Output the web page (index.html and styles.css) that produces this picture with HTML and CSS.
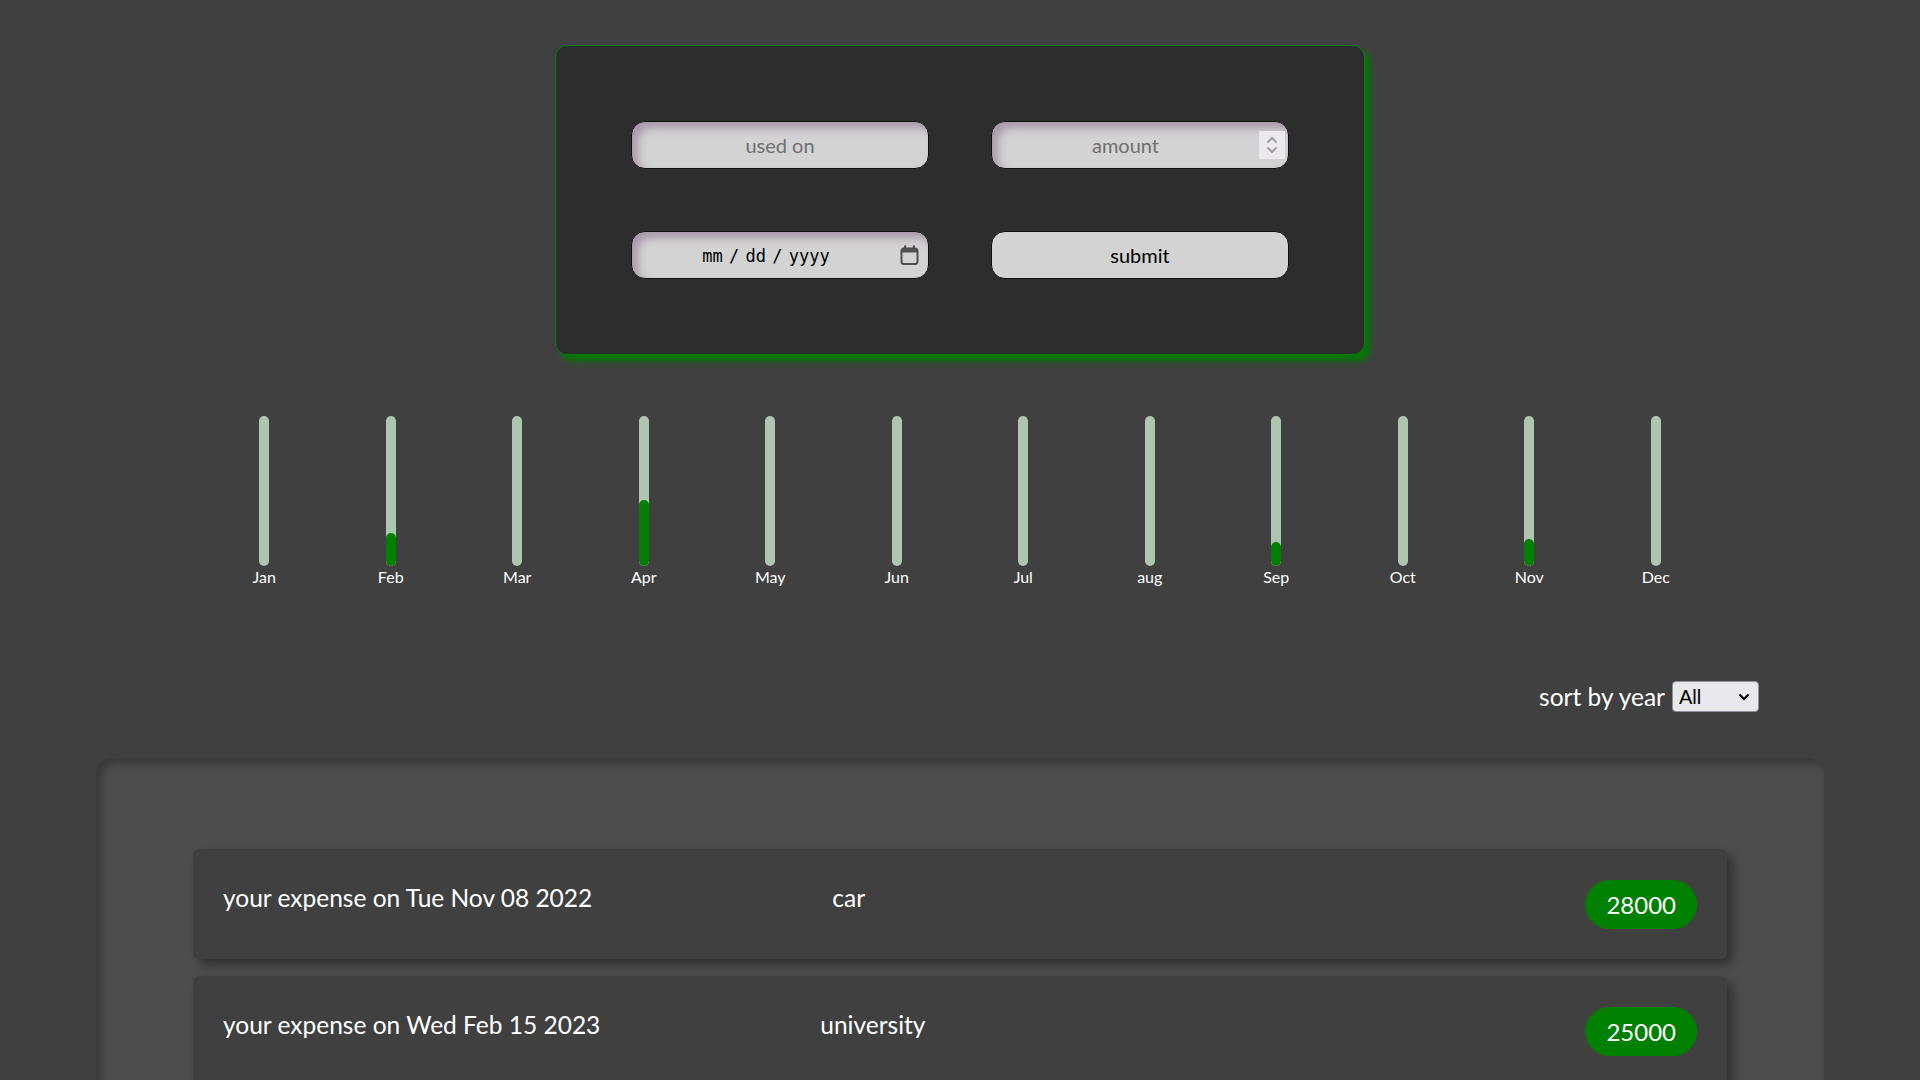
FILE: index.html
```html
<!DOCTYPE html>
<html lang="en">
<head>
<meta charset="utf-8">
<title>Expenses</title>
<link rel="stylesheet" href="styles.css">
</head>
<body>
<main class="app">
  <form class="new-expense">
    <div class="field">
      <input class="field-input" type="text" placeholder="used on">
    </div>
    <div class="field">
      <input class="field-input" type="number" placeholder="amount">
      <span class="spinner" aria-hidden="true">
        <svg width="14" height="22" viewBox="0 0 14 22"><path d="M2.5 8.5 L7 4 L11.5 8.5" fill="none" stroke="#8d8b93" stroke-width="1.7"/><path d="M2.5 13.5 L7 18 L11.5 13.5" fill="none" stroke="#8d8b93" stroke-width="1.7"/></svg>
      </span>
    </div>
    <div class="field">
      <input class="field-input date" type="text" placeholder="mm / dd / yyyy">
      <svg class="cal" width="19" height="20" viewBox="0 0 19 20" aria-hidden="true">
        <rect x="1.5" y="3.5" width="16" height="15.5" rx="2.5" fill="none" stroke="#4f4f4f" stroke-width="2"/>
        <path d="M1.5 6 a2.5 2.5 0 0 1 2.5 -2.5 h11 a2.5 2.5 0 0 1 2.5 2.5 V7.5 H1.5 Z" fill="#4f4f4f"/>
        <rect x="4" y="0.5" width="2.2" height="4" fill="#4f4f4f"/>
        <rect x="12.8" y="0.5" width="2.2" height="4" fill="#4f4f4f"/>
      </svg>
    </div>
    <button class="submit" type="button">submit</button>
  </form>

  <section class="chart">
    <div class="chart-bar"><div class="track"><div class="fill" style="height:0%"></div></div><span class="label">Jan</span></div>
    <div class="chart-bar"><div class="track"><div class="fill" style="height:22%"></div></div><span class="label">Feb</span></div>
    <div class="chart-bar"><div class="track"><div class="fill" style="height:0%"></div></div><span class="label">Mar</span></div>
    <div class="chart-bar"><div class="track"><div class="fill" style="height:44%"></div></div><span class="label">Apr</span></div>
    <div class="chart-bar"><div class="track"><div class="fill" style="height:0%"></div></div><span class="label">May</span></div>
    <div class="chart-bar"><div class="track"><div class="fill" style="height:0%"></div></div><span class="label">Jun</span></div>
    <div class="chart-bar"><div class="track"><div class="fill" style="height:0%"></div></div><span class="label">Jul</span></div>
    <div class="chart-bar"><div class="track"><div class="fill" style="height:0%"></div></div><span class="label">aug</span></div>
    <div class="chart-bar"><div class="track"><div class="fill" style="height:16%"></div></div><span class="label">Sep</span></div>
    <div class="chart-bar"><div class="track"><div class="fill" style="height:0%"></div></div><span class="label">Oct</span></div>
    <div class="chart-bar"><div class="track"><div class="fill" style="height:18%"></div></div><span class="label">Nov</span></div>
    <div class="chart-bar"><div class="track"><div class="fill" style="height:0%"></div></div><span class="label">Dec</span></div>
  </section>

  <div class="filter">
    <label class="filter-label" for="year">sort by year</label>
    <span class="select-wrap">
      <select id="year" class="filter-select"><option>All</option><option>2022</option><option>2023</option></select>
      <svg class="select-arrow" width="12" height="8" viewBox="0 0 12 8" aria-hidden="true"><path d="M1.5 1.5 L6 6 L10.5 1.5" fill="none" stroke="#000" stroke-width="2"/></svg>
    </span>
  </div>

  <section class="expenses">
    <article class="expense">
      <h2 class="expense-date">your expense on Tue Nov 08 2022</h2>
      <h2 class="expense-title">car</h2>
      <div class="expense-price"><span class="badge">28000</span></div>
    </article>
    <article class="expense">
      <h2 class="expense-date">your expense on Wed Feb 15 2023</h2>
      <h2 class="expense-title">university</h2>
      <div class="expense-price"><span class="badge">25000</span></div>
    </article>
  </section>
</main>
</body>
</html>
```
FILE: styles.css
```css
* { box-sizing: border-box; }

html, body {
  margin: 0;
  background: #404040;
  color: #ffffff;
  font-family: Lato, "Noto Sans", sans-serif;
}

.app {
  padding-top: 45px;
}

/* ---------- form card ---------- */
.new-expense {
  width: 810px;
  margin: 0 auto;
  padding: 75px;
  display: grid;
  grid-template-columns: 298px 298px;
  column-gap: 62px;
  row-gap: 62px;
  background: #2d2d2d;
  border: 1px solid #0b7a0b;
  border-radius: 12px;
  box-shadow: 5px 6px 6px #007a00;
}

.field {
  height: 48px;
  display: flex;
  align-items: center;
  background: #d3d3d3;
  border: 1px solid #111111;
  border-radius: 14px;
  box-shadow: inset 6px 6px 8px rgba(125, 95, 125, 0.5);
  overflow: hidden;
}

.field-input {
  flex: 1;
  min-width: 0;
  height: 100%;
  border: 0;
  outline: 0;
  background: transparent;
  text-align: center;
  font-family: Lato, "Noto Sans", sans-serif;
  font-size: 20px;
  color: #000;
  padding: 0;
}

.field-input::placeholder {
  color: #6f6f6f;
}

.field-input::-webkit-inner-spin-button,
.field-input::-webkit-outer-spin-button {
  -webkit-appearance: none;
  margin: 0;
}

.field-input.date {
  font-family: "DejaVu Sans Mono", monospace;
  font-size: 17px;
  letter-spacing: 0;
  word-spacing: -4px;
  padding-top: 1px;
}

.field-input.date::placeholder {
  color: #000;
  word-spacing: -4px;
}

.spinner {
  width: 26px;
  height: 28px;
  margin-right: 3px;
  display: flex;
  align-items: center;
  justify-content: center;
  background: #ebe9ee;
}

.cal {
  margin-right: 9px;
  flex: none;
}

.submit {
  height: 48px;
  background: #d3d3d3;
  border: 1px solid #111111;
  border-radius: 14px;
  font-family: Lato, "Noto Sans", sans-serif;
  font-size: 20px;
  color: #000;
  padding: 0;
}

/* ---------- chart ---------- */
.chart {
  width: 1518px;
  margin: 61px auto 0;
  display: grid;
  grid-template-columns: repeat(12, 1fr);
}

.chart-bar {
  display: flex;
  flex-direction: column;
  align-items: center;
}

.track {
  width: 10px;
  height: 150px;
  border-radius: 5px;
  background: #aec5b0;
  display: flex;
  flex-direction: column;
  justify-content: flex-end;
  overflow: hidden;
}

.fill {
  width: 100%;
  background: #008000;
  border-radius: 5px;
}

.label {
  margin-top: 1px;
  font-size: 16px;
  line-height: 19px;
  color: #ffffff;
}

/* ---------- filter ---------- */
.filter {
  margin-top: 95px;
  padding-right: 161px;
  display: flex;
  justify-content: flex-end;
  align-items: center;
  gap: 7px;
}

.filter-label {
  font-size: 24.5px;
  line-height: 29px;
  color: #ffffff;
}

.select-wrap {
  position: relative;
  display: inline-flex;
}

.filter-select {
  -webkit-appearance: none;
  appearance: none;
  width: 87px;
  height: 31px;
  font-family: "Liberation Sans", Arial, sans-serif;
  font-size: 20px;
  color: #000;
  background-color: #e9e8ed;
  border: 1px solid #8f8f9d;
  border-radius: 4px;
  padding: 0 24px 0 6px;
  margin: 0;
}

.select-arrow {
  position: absolute;
  right: 9px;
  top: 12px;
  pointer-events: none;
}

/* ---------- expenses list ---------- */
.expenses {
  width: 1728px;
  margin: 46px auto 0;
  padding: 91px 97px 40px;
  background: #4d4d4d;
  border-radius: 16px;
  box-shadow: inset 5px 5px 9px rgba(0, 0, 0, 0.28);
  display: flex;
  flex-direction: column;
  gap: 17px;
}

.expense {
  height: 110px;
  padding: 0 30px;
  display: flex;
  align-items: center;
  background: #404040;
  border-radius: 6px;
  box-shadow: 6px 6px 10px rgba(0, 0, 0, 0.35);
}

.expense-date,
.expense-title {
  margin: 0 0 13px;
  font-size: 24.5px;
  font-weight: 400;
  line-height: 29px;
  color: #ffffff;
}

.expense-title {
  flex: 1 1 auto;
  text-align: center;
}

.expense-price {
  flex: 1 1 auto;
  display: flex;
  justify-content: flex-end;
}

.badge {
  height: 49px;
  line-height: 49px;
  padding: 0 21px;
  border-radius: 25px;
  background: #008000;
  color: #ffffff;
  font-size: 24px;
}
```
